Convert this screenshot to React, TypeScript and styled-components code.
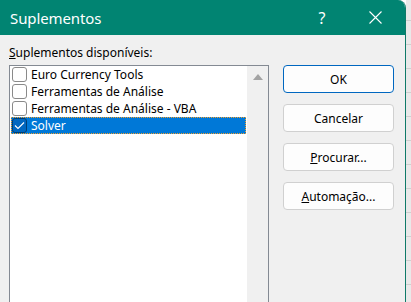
import React from 'react';
import styled, { createGlobalStyle } from 'styled-components';

const GlobalStyle = createGlobalStyle`
  html, body {
    margin: 0;
    padding: 0;
    background: #ffffff;
  }
  body {
    font-family: "Noto Sans", "Liberation Sans", sans-serif;
  }
`;

const Screen = styled.div`
  display: flex;
  width: 411px;
  height: 302px;
  overflow: hidden;
  background: #ffffff;
`;

const Dialog = styled.div`
  display: flex;
  flex-direction: column;
  width: 405px;
  flex-shrink: 0;
  background: #f0f0f0;
  border-right: 1px solid #0f7a68;
  border-top-right-radius: 8px;
  overflow: hidden;
`;

const TitleBar = styled.div`
  display: flex;
  align-items: center;
  height: 35px;
  flex-shrink: 0;
  background: #018472;
  color: #ffffff;
  padding-left: 10px;
`;

const Title = styled.h1`
  flex: 1;
  margin: 0;
  font-size: 15px;
  font-weight: 400;
  letter-spacing: -0.1px;
`;

const HelpMark = styled.span`
  width: 20px;
  font-size: 16px;
  text-align: center;
  margin-right: 37px;
`;

const CloseMark = styled.span`
  display: flex;
  width: 14px;
  margin-right: 22px;
`;

const Body = styled.div`
  display: flex;
  flex: 1;
  padding: 10px 0 0 9px;
  gap: 14px;
`;

const ListColumn = styled.div`
  display: flex;
  flex-direction: column;
  width: 260px;
`;

const FieldLabel = styled.label`
  font-size: 12px;
  color: #000000;
  height: 20px;
  line-height: 16px;
  & u {
    text-decoration-thickness: 1px;
  }
`;

const ListBox = styled.div`
  display: flex;
  flex: 1;
  background: #ffffff;
  border: 1px solid #848a93;
  border-bottom: none;
  margin-top: 0;
`;

const Items = styled.div`
  flex: 1;
  padding: 0 1px;
`;

const Row = styled.div<{ $selected?: boolean }>`
  display: flex;
  align-items: center;
  gap: 4px;
  height: 17px;
  padding-left: 1px;
  box-sizing: border-box;
  font-size: 12px;
  color: ${(p) => (p.$selected ? '#ffffff' : '#000000')};
  background: ${(p) => (p.$selected ? '#0078d7' : 'transparent')};
  outline: ${(p) => (p.$selected ? '1px dotted #f0a030' : 'none')};
  outline-offset: -1px;
`;

const Check = styled.span<{ $checked?: boolean }>`
  display: flex;
  align-items: center;
  justify-content: center;
  width: 15px;
  height: 15px;
  box-sizing: border-box;
  border: 1px solid ${(p) => (p.$checked ? '#003e73' : '#8a8a8a')};
  border-radius: 3px;
  background: ${(p) => (p.$checked ? '#0067c0' : '#ffffff')};
`;

const ScrollTrack = styled.div`
  width: 21px;
  background: #f0f0f0;
  display: flex;
  justify-content: center;
  padding-top: 8px;
`;

const ButtonColumn = styled.div`
  display: flex;
  flex-direction: column;
  gap: 11px;
  padding-top: 20px;
`;

const Button = styled.button<{ $primary?: boolean }>`
  width: 111px;
  height: 28px;
  box-sizing: border-box;
  border: 1px solid ${(p) => (p.$primary ? '#0067c0' : '#d0d0d0')};
  border-radius: 4px;
  background: #fdfdfd;
  font-family: inherit;
  font-size: 12px;
  color: #000000;
  padding: 0;
  & u {
    text-decoration-thickness: 1px;
  }
`;

const SheetEdge = styled.div`
  flex: 1;
  background-color: #e9e9e9;
  background-image: repeating-linear-gradient(
    to bottom,
    transparent 0,
    transparent 20px,
    #cfcfcf 20px,
    #cfcfcf 21px,
    transparent 21px,
    transparent 24px
  );
`;

const items = [
  { name: 'Euro Currency Tools', checked: false },
  { name: 'Ferramentas de Análise', checked: false },
  { name: 'Ferramentas de Análise - VBA', checked: false },
  { name: 'Solver', checked: true },
];

function App(): JSX.Element {
  return (
    <Screen>
      <GlobalStyle />
      <Dialog>
        <TitleBar>
          <Title>Suplementos</Title>
          <HelpMark>?</HelpMark>
          <CloseMark>
            <svg width="13" height="13" viewBox="0 0 13 13">
              <path d="M0.5 0.5 L12.5 12.5 M12.5 0.5 L0.5 12.5" stroke="#ffffff" strokeWidth="1.1" fill="none" />
            </svg>
          </CloseMark>
        </TitleBar>
        <Body>
          <ListColumn>
            <FieldLabel><u>S</u>uplementos disponíveis:</FieldLabel>
            <ListBox>
              <Items>
                {items.map((item) => (
                  <Row key={item.name} $selected={item.checked}>
                    <Check $checked={item.checked}>
                      {item.checked && (
                        <svg width="11" height="9" viewBox="0 0 11 9">
                          <path d="M1 4.5 L4 7.5 L10 1.5" stroke="#ffffff" strokeWidth="1.1" fill="none" />
                        </svg>
                      )}
                    </Check>
                    {item.name}
                  </Row>
                ))}
              </Items>
              <ScrollTrack>
                <svg width="10" height="6" viewBox="0 0 10 6">
                  <path d="M5 0 L10 6 L0 6 Z" fill="#a3a3a3" />
                </svg>
              </ScrollTrack>
            </ListBox>
          </ListColumn>
          <ButtonColumn>
            <Button $primary>OK</Button>
            <Button>Cancelar</Button>
            <Button><u>P</u>rocurar...</Button>
            <Button><u>A</u>utomação...</Button>
          </ButtonColumn>
        </Body>
      </Dialog>
      <SheetEdge />
    </Screen>
  );
}

export default App;
